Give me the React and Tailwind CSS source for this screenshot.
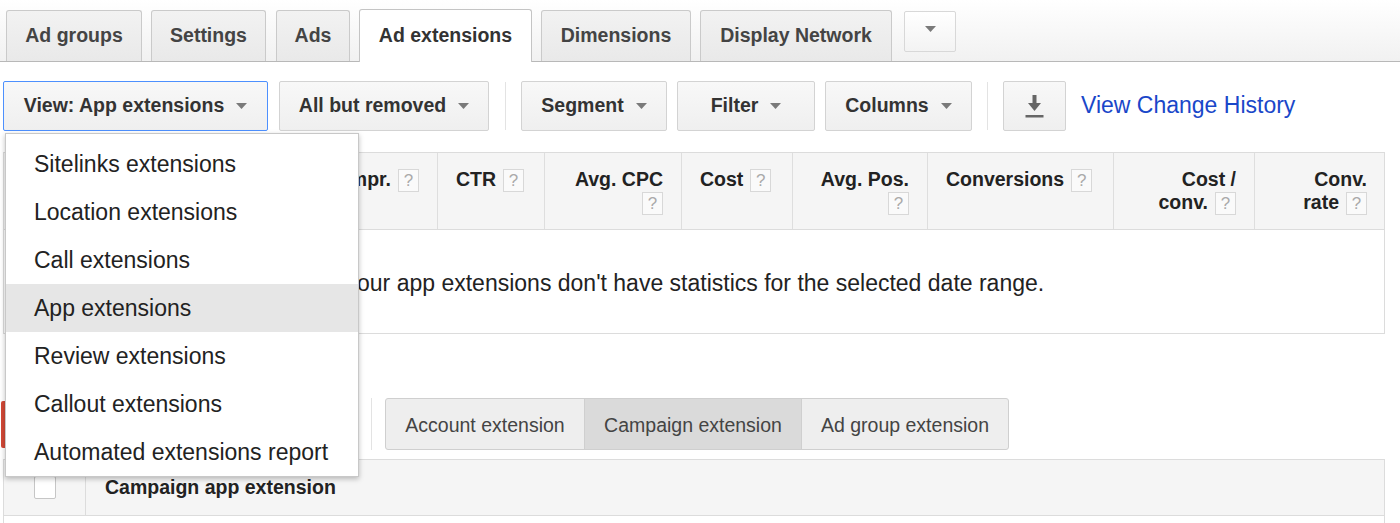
import React from 'react'

const TABS = [
  { label: 'Ad groups', w: 'w-[136px]' },
  { label: 'Settings', w: 'w-[115px]' },
  { label: 'Ads', w: 'w-[74px]' },
  { label: 'Ad extensions', w: 'w-[173px]', active: true },
  { label: 'Dimensions', w: 'w-[150px]' },
  { label: 'Display Network', w: 'w-[192px]' },
]

const MENU = [
  'Sitelinks extensions',
  'Location extensions',
  'Call extensions',
  'App extensions',
  'Review extensions',
  'Callout extensions',
  'Automated extensions report',
]

function Caret({ className = '' }) {
  return (
    <svg width="11" height="6" viewBox="0 0 11 6" className={className}>
      <path d="M0 0 L11 0 L5.5 6 Z" fill="#7a7a7a" />
    </svg>
  )
}

function Help() {
  return (
    <span className="inline-flex w-[21px] h-[23px] items-center justify-center border border-[#d8d8d8] bg-[#fafafa] text-[17px] font-normal text-[#aaa] align-middle ml-[7px] leading-none">
      ?
    </span>
  )
}

function ToolButton({ label, w, focused }) {
  return (
    <button
      className={`h-[50px] ${w} flex items-center justify-center gap-[12px] rounded-[2px] border ${
        focused ? 'border-[#4d90fe]' : 'border-[#d3d3d3]'
      } bg-linear-to-b from-[#f8f8f8] to-[#efefef] text-[19.5px] font-bold text-[#333]`}
    >
      <span>{label}</span>
      <Caret />
    </button>
  )
}

function Sep() {
  return <div className="w-px h-[48px] bg-[#e3e3e3]" />
}

function HeadCell({ children, right, last }) {
  return (
    <div
      className={`px-[18px] pt-[15px] leading-[23px] whitespace-nowrap ${right ? 'text-right' : 'text-left'} ${
        last ? '' : 'border-r border-[#dedede]'
      }`}
    >
      {children}
    </div>
  )
}

export default function App() {
  return (
    <div
      className="relative w-[1400px] h-[523px] overflow-hidden bg-white text-[#222]"
      style={{ fontFamily: "'Liberation Sans', Arial, sans-serif" }}
    >
      {/* tab strip */}
      <div className="h-[62px] flex items-end pl-[6px] border-b border-[#b8b8b8] bg-linear-to-b from-white to-[#f1f1f1]">
        {TABS.map((t, i) => (
          <div
            key={t.label}
            className={`${t.w} ${i > 0 ? (i === 2 ? 'ml-[10px]' : 'ml-[9px]') : ''} flex items-center justify-center rounded-t-[3px] border border-b-0 text-[19.5px] font-bold ${
              t.active
                ? 'h-[53px] -mb-px bg-white border-[#c4c4c4] text-[#333]'
                : 'h-[51px] bg-linear-to-b from-[#f2f2f2] to-[#e9e9e9] border-[#cacaca] text-[#444]'
            }`}
          >
            {t.label}
          </div>
        ))}
        <div className="self-start mt-[11px] ml-[12px] w-[52px] h-[41px] flex items-center justify-center rounded-[2px] border border-[#d8d8d8] bg-linear-to-b from-white to-[#f3f3f3]">
          <Caret className="-mt-[6px]" />
        </div>
      </div>

      {/* toolbar */}
      <div className="mt-[19px] flex items-center pl-[3px] h-[50px]">
        <ToolButton label="View: App extensions" w="w-[265px]" focused />
        <div className="ml-[11px]">
          <ToolButton label="All but removed" w="w-[210px]" />
        </div>
        <div className="ml-[16px]">
          <Sep />
        </div>
        <div className="ml-[15px]">
          <ToolButton label="Segment" w="w-[146px]" />
        </div>
        <div className="ml-[10px]">
          <ToolButton label="Filter" w="w-[138px]" />
        </div>
        <div className="ml-[10px]">
          <ToolButton label="Columns" w="w-[147px]" />
        </div>
        <div className="ml-[15px]">
          <Sep />
        </div>
        <button className="ml-[15px] w-[63px] h-[50px] flex items-center justify-center rounded-[2px] border border-[#d3d3d3] bg-linear-to-b from-[#f8f8f8] to-[#efefef]">
          <svg width="19" height="24" viewBox="0 0 19 24">
            <rect x="7.5" y="1" width="4" height="9" fill="#666" />
            <path d="M3 9 L16 9 L9.5 17 Z" fill="#666" />
            <rect x="0.5" y="21" width="18" height="2.5" fill="#666" />
          </svg>
        </button>
        <a className="ml-[15px] -mt-[2px] text-[23px] text-[#1a47c9]">View Change History</a>
      </div>

      {/* stats table */}
      <div className="mt-[21px] ml-[3px] w-[1382px] border border-[#dcdcdc]">
        <div className="grid grid-cols-[207px_107px_120px_107px_137px_111px_135px_186px_141px_130px] h-[77px] bg-[#f5f5f5] border-b border-[#dcdcdc] text-[19.5px] font-bold text-[#222]">
          <HeadCell />
          <HeadCell right />
          <HeadCell right>
            Impr.
            <Help />
          </HeadCell>
          <HeadCell>
            CTR
            <Help />
          </HeadCell>
          <HeadCell right>
            Avg. CPC
            <br />
            <Help />
          </HeadCell>
          <HeadCell>
            Cost
            <Help />
          </HeadCell>
          <HeadCell right>
            Avg. Pos.
            <br />
            <Help />
          </HeadCell>
          <HeadCell>
            Conversions
            <Help />
          </HeadCell>
          <HeadCell right>
            Cost /
            <br />
            conv.
            <Help />
          </HeadCell>
          <HeadCell right last>
            Conv.
            <br />
            rate
            <Help />
          </HeadCell>
        </div>
        <div className="h-[103px] flex items-center justify-center pt-[3px] text-[23px] text-[#222]">
          Your app extensions don't have statistics for the selected date range.
        </div>
      </div>

      {/* extension level row */}
      <div className="mt-[64px] flex items-center h-[52px]">
        <div className="ml-px w-[340px] h-[47px] rounded-[2px] bg-[#d14836]" />
        <div className="ml-[30px] w-px h-[52px] bg-[#e3e3e3]" />
        <div className="ml-[13px] flex h-[52px] pt-[3px] rounded-[3px] border border-[#cfcfcf] overflow-hidden text-[19.5px] text-[#444] bg-[#eeeeee]">
          <div className="w-[198px] flex items-center justify-center">Account extension</div>
          <div className="w-[218px] -mt-[3px] pt-[3px] flex items-center justify-center bg-[#dadada] border-x border-[#cfcfcf]">
            Campaign extension
          </div>
          <div className="w-[206px] flex items-center justify-center">Ad group extension</div>
        </div>
      </div>

      {/* extensions table */}
      <div className="mt-[9px] ml-[3px] w-[1382px] border-x border-t border-[#dcdcdc]">
        <div className="flex h-[56px] bg-[#f5f5f5] border-b border-[#dcdcdc]">
          <div className="w-[82px] flex items-center justify-center border-r border-[#dcdcdc]">
            <div className="w-[22px] h-[23px] rounded-[2px] border border-[#c6c6c6] bg-white" />
          </div>
          <div className="pl-[19px] flex items-center text-[19.5px] font-bold text-[#222]">Campaign app extension</div>
        </div>
        <div className="h-[20px] bg-white" />
      </div>

      {/* view dropdown menu */}
      <div className="absolute left-[5px] top-[133px] w-[354px] h-[344px] pt-[6px] bg-white border border-[#c8c8c8] shadow-[0_2px_5px_rgba(0,0,0,0.25)]">
        {MENU.map((m) => (
          <div
            key={m}
            className={`h-[48px] flex items-center pl-[28px] text-[23px] text-[#222] ${
              m === 'App extensions' ? 'bg-[#e6e6e6]' : ''
            }`}
          >
            {m}
          </div>
        ))}
      </div>
    </div>
  )
}
